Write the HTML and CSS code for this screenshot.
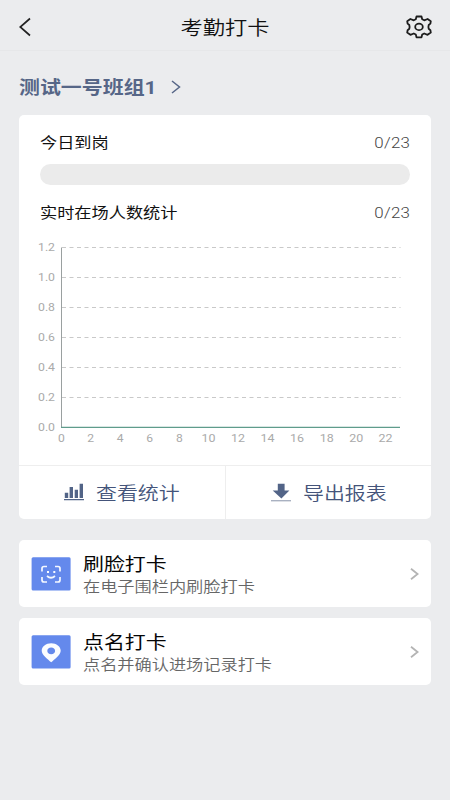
FILE: index.html
```
<!DOCTYPE html>
<html lang="zh-CN">
<head>
<meta charset="utf-8">
<title>考勤打卡</title>
<link rel="stylesheet" href="styles.css">
</head>
<body>
<header class="topbar">
  <svg class="back" width="12" height="20" viewBox="0 0 12 20"><path d="M11 1.5 1.2 10 11 18.5"/></svg>
  <h1 class="title"><span class="wide">考勤打卡</span></h1>
  <svg class="gear" width="26" height="24" viewBox="0 0 26 24">
    <path d="M10.5 1.5H15.5L16.2 4.3L18.2 5.3L21.6 4L24.8 6.2L24.4 8.6L22.7 10Q22.1 11.9 22.7 13.8L24.4 15.2L24.8 17.6L21.6 19.8L18.2 18.5L16.2 19.5L15.5 22.3H10.5L9.8 19.5L7.8 18.5L4.4 19.8L1.2 17.6L1.6 15.2L3.3 13.8Q3.9 11.9 3.3 10L1.6 8.6L1.2 6.2L4.4 4L7.8 5.3L9.8 4.3Z"/>
    <ellipse cx="13" cy="11.9" rx="3.8" ry="3.2"/>
  </svg>
</header>
<main class="content">
  <div class="group">
    <span class="wide">测试一号班组1</span>
    <svg class="group-arrow" width="10" height="14" viewBox="0 0 10 14"><path d="M1 1 8.5 7 1 13"/></svg>
  </div>
  <section class="card stats">
    <div class="row"><span class="wide">今日到岗</span><span class="count">0/23</span></div>
    <div class="progress"></div>
    <div class="row"><span class="wide">实时在场人数统计</span><span class="count">0/23</span></div>
    <svg class="chart" width="412" height="240" viewBox="19 225 412 240">
      <g class="grid">
        <path d="M62 247.5H400.5M62 277.5H400.5M62 307.5H400.5M62 337.5H400.5M62 367.5H400.5M62 397.5H400.5"/>
      </g>
      <path class="axis" d="M61.5 247.5V427"/>
      <path class="series" d="M61 427.4H400"/>
      <g class="labels y">
        <text x="55" y="251" textLength="17" lengthAdjust="spacingAndGlyphs">1.2</text>
        <text x="55" y="281" textLength="17" lengthAdjust="spacingAndGlyphs">1.0</text>
        <text x="55" y="311" textLength="17" lengthAdjust="spacingAndGlyphs">0.8</text>
        <text x="55" y="341" textLength="17" lengthAdjust="spacingAndGlyphs">0.6</text>
        <text x="55" y="371" textLength="17" lengthAdjust="spacingAndGlyphs">0.4</text>
        <text x="55" y="401" textLength="17" lengthAdjust="spacingAndGlyphs">0.2</text>
        <text x="55" y="430.5" textLength="17" lengthAdjust="spacingAndGlyphs">0.0</text>
      </g>
      <g class="labels x">
        <text x="61.3" y="441.5" textLength="6.8" lengthAdjust="spacingAndGlyphs">0</text>
        <text x="90.6" y="441.5" textLength="6.8" lengthAdjust="spacingAndGlyphs">2</text>
        <text x="120.2" y="441.5" textLength="6.8" lengthAdjust="spacingAndGlyphs">4</text>
        <text x="149.7" y="441.5" textLength="6.8" lengthAdjust="spacingAndGlyphs">6</text>
        <text x="179.3" y="441.5" textLength="6.8" lengthAdjust="spacingAndGlyphs">8</text>
        <text x="208.6" y="441.5" textLength="14" lengthAdjust="spacingAndGlyphs">10</text>
        <text x="238" y="441.5" textLength="14" lengthAdjust="spacingAndGlyphs">12</text>
        <text x="267.5" y="441.5" textLength="14" lengthAdjust="spacingAndGlyphs">14</text>
        <text x="297" y="441.5" textLength="14" lengthAdjust="spacingAndGlyphs">16</text>
        <text x="326.8" y="441.5" textLength="14" lengthAdjust="spacingAndGlyphs">18</text>
        <text x="356.2" y="441.5" textLength="14" lengthAdjust="spacingAndGlyphs">20</text>
        <text x="385.5" y="441.5" textLength="14" lengthAdjust="spacingAndGlyphs">22</text>
      </g>
    </svg>
    <div class="actions">
      <div class="action">
        <svg width="20" height="18" viewBox="0 0 20 18"><path d="M.8 9.7h3.4V15H.8zM5.6 4H9v11H5.6zM10.7 6.8H14V15h-3.3zM15.6 .8H19V15h-3.4zM0 16h20v1.3H0z"/></svg>
        <span class="wide">查看统计</span>
      </div>
      <div class="action">
        <svg width="20" height="19" viewBox="0 0 20 19"><path d="M6.8 .7h6.8v6.7h4.8L10.4 15.5 1.7 7.4h5.1z"/><path class="tray" d="M0 17h20v1.4H0z"/></svg>
        <span class="wide">导出报表</span>
      </div>
    </div>
  </section>
  <section class="card entry">
    <svg class="tile" width="40" height="34" viewBox="0 0 40 34">
      <rect x=".6" y=".3" width="39" height="33.2" rx="1.5"/>
      <path class="line" d="M11 14.5V11.5Q11 9.5 13 9.5H16M24 9.5H27Q29 9.5 29 11.5V14.5M29 20V23Q29 25 27 25H24M16 25H13Q11 25 11 23V20M16 19Q20 22.5 24 19"/>
      <path class="solid" d="M16 14h2v2h-2zM22.3 14h2v2h-2z"/>
    </svg>
    <div class="entry-text">
      <h2><span class="wide">刷脸打卡</span></h2>
      <p><span class="wide">在电子围栏内刷脸打卡</span></p>
    </div>
    <svg class="more" width="9" height="12" viewBox="0 0 9 12"><path d="M1 .8 7.6 6 1 11.2"/></svg>
  </section>
  <section class="card entry">
    <svg class="tile" width="40" height="34" viewBox="0 0 40 34">
      <rect x=".6" y=".3" width="39" height="33.2" rx="1.5"/>
      <path class="solid" fill-rule="evenodd" d="M20.2 27.3C17 24.5 10.7 20 10.7 15.8C10.7 11.5 15 8.2 20.2 8.2S29.7 11.5 29.7 15.8C29.7 20 23.4 24.5 20.2 27.3ZM20.2 12.6C17.9 12.6 16.3 14 16.3 15.9S17.9 19.2 20.2 19.2S24.1 17.8 24.1 15.9S22.5 12.6 20.2 12.6Z"/>
    </svg>
    <div class="entry-text">
      <h2><span class="wide">点名打卡</span></h2>
      <p><span class="wide">点名并确认进场记录打卡</span></p>
    </div>
    <svg class="more" width="9" height="12" viewBox="0 0 9 12"><path d="M1 .8 7.6 6 1 11.2"/></svg>
  </section>
</main>
</body>
</html>
```

FILE: styles.css
```
* { box-sizing: border-box; }
body {
  margin: 0;
  min-height: 800px;
  background: #ebecee;
  color: #111;
  font-family: Roboto, "Noto Sans CJK SC", sans-serif;
}
h1, h2, p { margin: 0; font-weight: 400; }
svg { display: block; flex: none; }
.wide {
  display: inline-block;
  white-space: nowrap;
  transform: scaleX(1.17);
  transform-origin: left center;
}
.topbar {
  display: grid;
  grid-template-columns: 1fr auto 1fr;
  align-items: center;
  height: 51px;
  padding: 4px 18px 0 19px;
  border-bottom: 1px solid #e6e7e9;
}
.back path { fill: none; stroke: #222; stroke-width: 1.7; }
.title { font-size: 19px; line-height: 28px; padding-top: 3px; font-weight: 350; }
.title .wide { transform-origin: center; }
.gear { justify-self: end; }
.gear path, .gear ellipse { fill: none; stroke: #1c1c1c; stroke-width: 1.8; stroke-linejoin: round; }
.content { padding: 0 19px; }
.group {
  display: flex;
  align-items: center;
  height: 64px;
  padding-top: 8px;
  gap: 34px;
  color: #566687;
  font-size: 17.9px;
  font-weight: 700;
}
.group .wide { padding-bottom: 2px; }
.group-arrow path { fill: none; stroke: #566687; stroke-width: 1.5; }
.card { background: #fff; border-radius: 5px; }
.stats { height: 404px; padding-top: 16px; }
.row {
  display: flex;
  justify-content: space-between;
  height: 24px;
  padding: 0 21px;
  font-size: 14.7px;
  line-height: 24px;
}
.count {
  color: #444;
  font-size: 14.7px;
  font-weight: 300;
  transform: scaleX(1.15);
  transform-origin: right center;
  letter-spacing: .2px;
}
.progress {
  height: 21px;
  margin: 9px 21px 16px;
  border-radius: 11px;
  background: #ebebeb;
}
.grid path { fill: none; stroke: #c9c9c9; stroke-width: 1; stroke-dasharray: 4 3.5; }
.axis { fill: none; stroke: #9aa0a0; stroke-width: 1; }
.series { fill: none; stroke: #5f9c8c; stroke-width: 1.2; }
.labels { fill: #aaa; font-size: 10.5px; }
.labels.y { text-anchor: end; }
.labels.x { text-anchor: middle; }
.actions { display: flex; height: 54px; border-top: 1px solid #eee; }
.action {
  flex: 1;
  display: flex;
  align-items: center;
  gap: 12px;
  padding: 0 0 1px 45px;
  color: #44547a;
  font-size: 17.9px;
  font-weight: 350;
}
.action + .action { border-left: 1px solid #eee; }
.action svg { fill: #526487; }
.action svg .tray { fill: #a9b1c1; }
.entry {
  display: flex;
  align-items: center;
  height: 67px;
  margin-top: 21px;
  padding: 0 12px;
}
.entry + .entry { margin-top: 11px; }
.tile rect { fill: #6489ec; }
.tile .line { fill: none; stroke: #f4f8ff; stroke-width: 1.7; }
.tile .solid { fill: #fafcff; }
.entry-text { flex: 1; margin-left: 12px; padding-top: 2px; }
.entry-text h2 { font-size: 17.9px; line-height: 24px; color: #050505; }
.entry-text p { font-size: 14.7px; line-height: 20px; color: #666; font-weight: 350; }
.more path { fill: none; stroke: #b4b4b4; stroke-width: 1.8; }
```
